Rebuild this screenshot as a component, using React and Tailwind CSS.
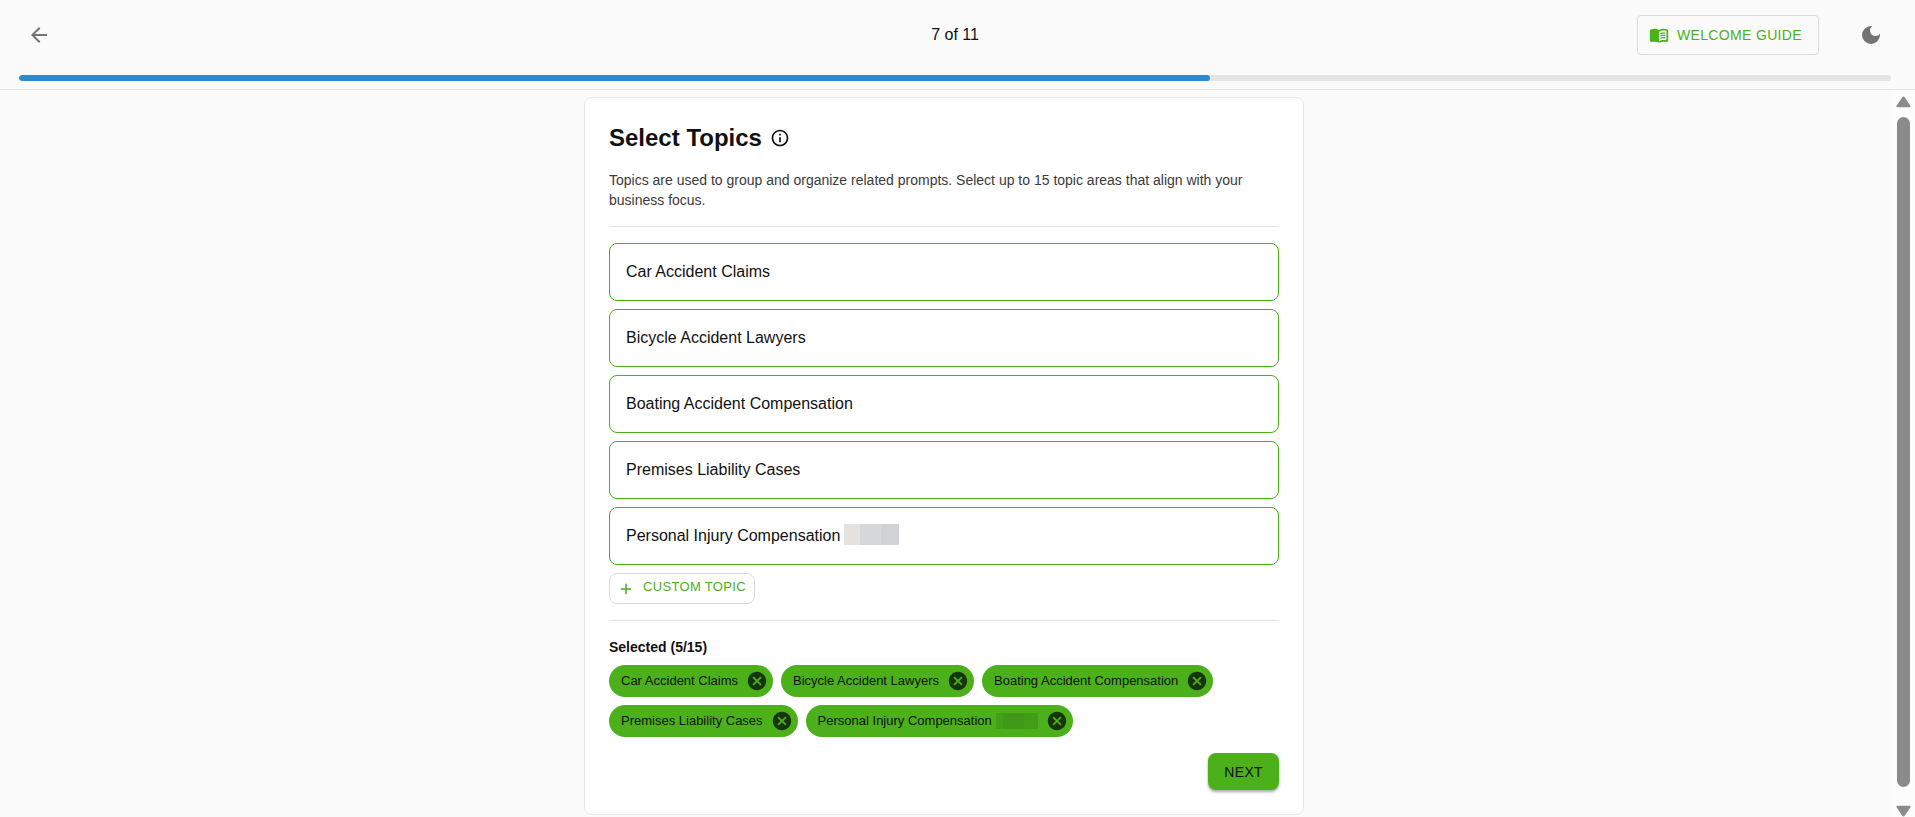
import React from 'react'
import { MdAdd, MdArrowBack, MdCancel, MdDarkMode, MdInfoOutline } from 'react-icons/md'

const STEP = 7
const TOTAL_STEPS = 11
const MAX_TOPICS = 15

const topics = [
  { name: 'Car Accident Claims' },
  { name: 'Bicycle Accident Lawyers' },
  { name: 'Boating Accident Compensation' },
  { name: 'Premises Liability Cases' },
  { name: 'Personal Injury Compensation', masked: true },
]

// open book, left page solid, right page with three text lines
const BookIcon = () => (
  <svg width="20" height="20" viewBox="0 0 24 24" fill="currentColor">
    <path d="M17.5 4.5c-1.95 0-4.05.4-5.5 1.5-1.45-1.1-3.55-1.5-5.5-1.5-1.45 0-2.99.22-4.28.79C1.49 5.62 1 6.33 1 7.14v11.28c0 1.3 1.22 2.26 2.48 1.94.98-.25 2.02-.36 3.02-.36 1.56 0 3.22.26 4.56.92.6.3 1.28.3 1.87 0 1.34-.67 3-.92 4.56-.92 1 0 2.04.11 3.02.36 1.26.33 2.48-.63 2.48-1.94V7.14c0-.81-.49-1.52-1.22-1.85-1.28-.57-2.82-.79-4.27-.79zM21 17.23c0 .63-.58 1.09-1.2.98-.75-.14-1.53-.2-2.3-.2-1.7 0-4.15.65-5.5 1.5V8c1.35-.85 3.8-1.5 5.5-1.5.92 0 1.83.09 2.7.28.46.1.8.51.8.98z" />
    <path d="M13.98 11.01c-.32 0-.61-.2-.71-.52-.13-.39.09-.82.48-.94 1.54-.5 3.53-.66 5.36-.45.41.05.71.42.66.83s-.42.71-.83.66c-1.62-.19-3.39-.04-4.73.39-.08.01-.16.03-.23.03zM13.98 13.67c-.32 0-.61-.2-.71-.52-.13-.39.09-.82.48-.94 1.53-.5 3.53-.66 5.36-.45.41.05.71.42.66.83s-.42.71-.83.66c-1.62-.19-3.39-.04-4.73.39-.08.02-.16.03-.23.03zM13.98 16.33c-.32 0-.61-.2-.71-.52-.13-.39.09-.82.48-.94 1.53-.5 3.53-.66 5.36-.45.41.05.71.42.66.83s-.42.7-.83.66c-1.62-.19-3.39-.04-4.73.39-.08.02-.16.03-.23.03z" />
  </svg>
)

const Header = () => (
  <header className="shrink-0 border-b border-[#e6e6e6] px-[19px] pt-[15px] pb-2">
    <div className="mr-[5px] grid grid-cols-[1fr_auto_1fr] items-center">
      <button aria-label="Back" className="flex size-10 items-center justify-center text-[#737373]">
        <MdArrowBack size={24} />
      </button>
      <p className="text-base">{STEP} of {TOTAL_STEPS}</p>
      <div className="flex items-center justify-end gap-8">
        <button className="flex h-10 items-center gap-2 rounded border border-[#dadbe0] pr-4 pl-[11px] text-sm tracking-wide text-[#4bb01a]">
          <BookIcon />
          WELCOME GUIDE
        </button>
        <button aria-label="Dark mode" className="flex size-10 items-center justify-center text-[#737373]">
          <MdDarkMode size={24} />
        </button>
      </div>
    </div>
    <div
      role="progressbar"
      aria-valuenow={STEP}
      aria-valuemax={TOTAL_STEPS}
      className="mt-5 mr-[5px] h-1.5 overflow-hidden rounded-full bg-[#e5e5e5]"
    >
      <div className="h-full rounded-full bg-[#2d89d3]" style={{ width: `${(STEP / TOTAL_STEPS) * 100}%` }} />
    </div>
  </header>
)

const TopicOption = ({ topic }) => (
  <button className="flex h-[58px] w-full items-center rounded-lg border border-[#4bb01a] px-4 text-left text-base">
    {topic.name}
    {topic.masked && (
      <span className="mb-1 ml-1 flex h-[21px]">
        <span className="w-4 bg-[#e4e2e0]" />
        <span className="w-[21px] bg-[#d6d7d9]" />
        <span className="w-[18px] bg-[#d0d2d5]" />
      </span>
    )}
  </button>
)

const TopicChip = ({ topic }) => (
  <li className="flex h-8 items-center rounded-full bg-[#4bb01a] pr-[5px] pl-3 text-[13px]">
    {topic.name}
    {topic.masked && (
      <span className="ml-1 flex h-4">
        <span className="w-[7px] bg-[#449f18]" />
        <span className="w-[21px] bg-[#3f9816]" />
        <span className="w-[14px] bg-[#429e17]" />
      </span>
    )}
    <button aria-label={`Remove ${topic.name}`} className="ml-2 text-[#17350a]">
      <MdCancel size={22} />
    </button>
  </li>
)

const Scrollbar = () => (
  <div className="flex w-[23px] shrink-0 flex-col items-center bg-[#fcfcfc] pt-[6px] pr-1 pl-1 text-[#8b8b8b]">
    <svg width="15" height="12" viewBox="0 0 15 12" fill="currentColor">
      <path d="M6.3 1.2a1.4 1.4 0 0 1 2.4 0l5.6 8.3c.6.9.1 1.7-.9 1.7H1.6c-1 0-1.5-.8-.9-1.7z" />
    </svg>
    <div className="mt-[9px] w-[13px] flex-1 rounded-full bg-[#8b8b8b]" />
    <svg className="mt-[18px]" width="15" height="12" viewBox="0 0 15 12" fill="currentColor">
      <path d="M6.3 10.8a1.4 1.4 0 0 0 2.4 0l5.6-8.3c.6-.9.1-1.7-.9-1.7H1.6c-1 0-1.5.8-.9 1.7z" />
    </svg>
  </div>
)

const App = () => {
  return (
    <div className="flex h-screen flex-col bg-[#fafafa] font-['Liberation_Sans',Arial,sans-serif] text-[#111]">
      <Header />

      <div className="flex min-h-0 flex-1">
        <main className="min-w-0 flex-1 overflow-hidden pt-[7px] pr-1">
          <section className="mx-auto max-w-[720px] rounded-lg border border-[#e8e8e8] bg-white p-6">
            <div className="flex items-center gap-2">
              <h1 className="text-2xl font-bold">Select Topics</h1>
              <button aria-label="About topics">
                <MdInfoOutline size={20} />
              </button>
            </div>
            <p className="mt-4 text-sm leading-5 text-[#3a3a3a]">
              Topics are used to group and organize related prompts. Select up to 15 topic areas that align with your
              business focus.
            </p>

            <div className="mt-4 flex flex-col gap-2 border-t border-[#e5e5e5] pt-4">
              {topics.map((topic) => (
                <TopicOption key={topic.name} topic={topic} />
              ))}
              <button className="flex h-[31px] items-center gap-2 self-start rounded-lg border border-[#dadbe0] pr-2 pl-[7px] text-[13px] tracking-wide text-[#4bb01a]">
                <MdAdd size={18} />
                <span className="pb-1">CUSTOM TOPIC</span>
              </button>
            </div>

            <div className="mt-4 border-t border-[#e5e5e5] pt-4">
              <h2 className="text-sm leading-5 font-bold">
                Selected ({topics.length}/{MAX_TOPICS})
              </h2>
              <ul className="mt-2 flex flex-wrap gap-2">
                {topics.map((topic) => (
                  <TopicChip key={topic.name} topic={topic} />
                ))}
              </ul>
            </div>

            <div className="mt-4 flex justify-end">
              <button className="h-[37px] rounded-lg bg-[#4bb01a] px-4 text-sm tracking-wide shadow-[0_2px_3px_rgba(0,0,0,0.35)]">
                NEXT
              </button>
            </div>
          </section>
        </main>
        <Scrollbar />
      </div>
    </div>
  )
}

export default App
